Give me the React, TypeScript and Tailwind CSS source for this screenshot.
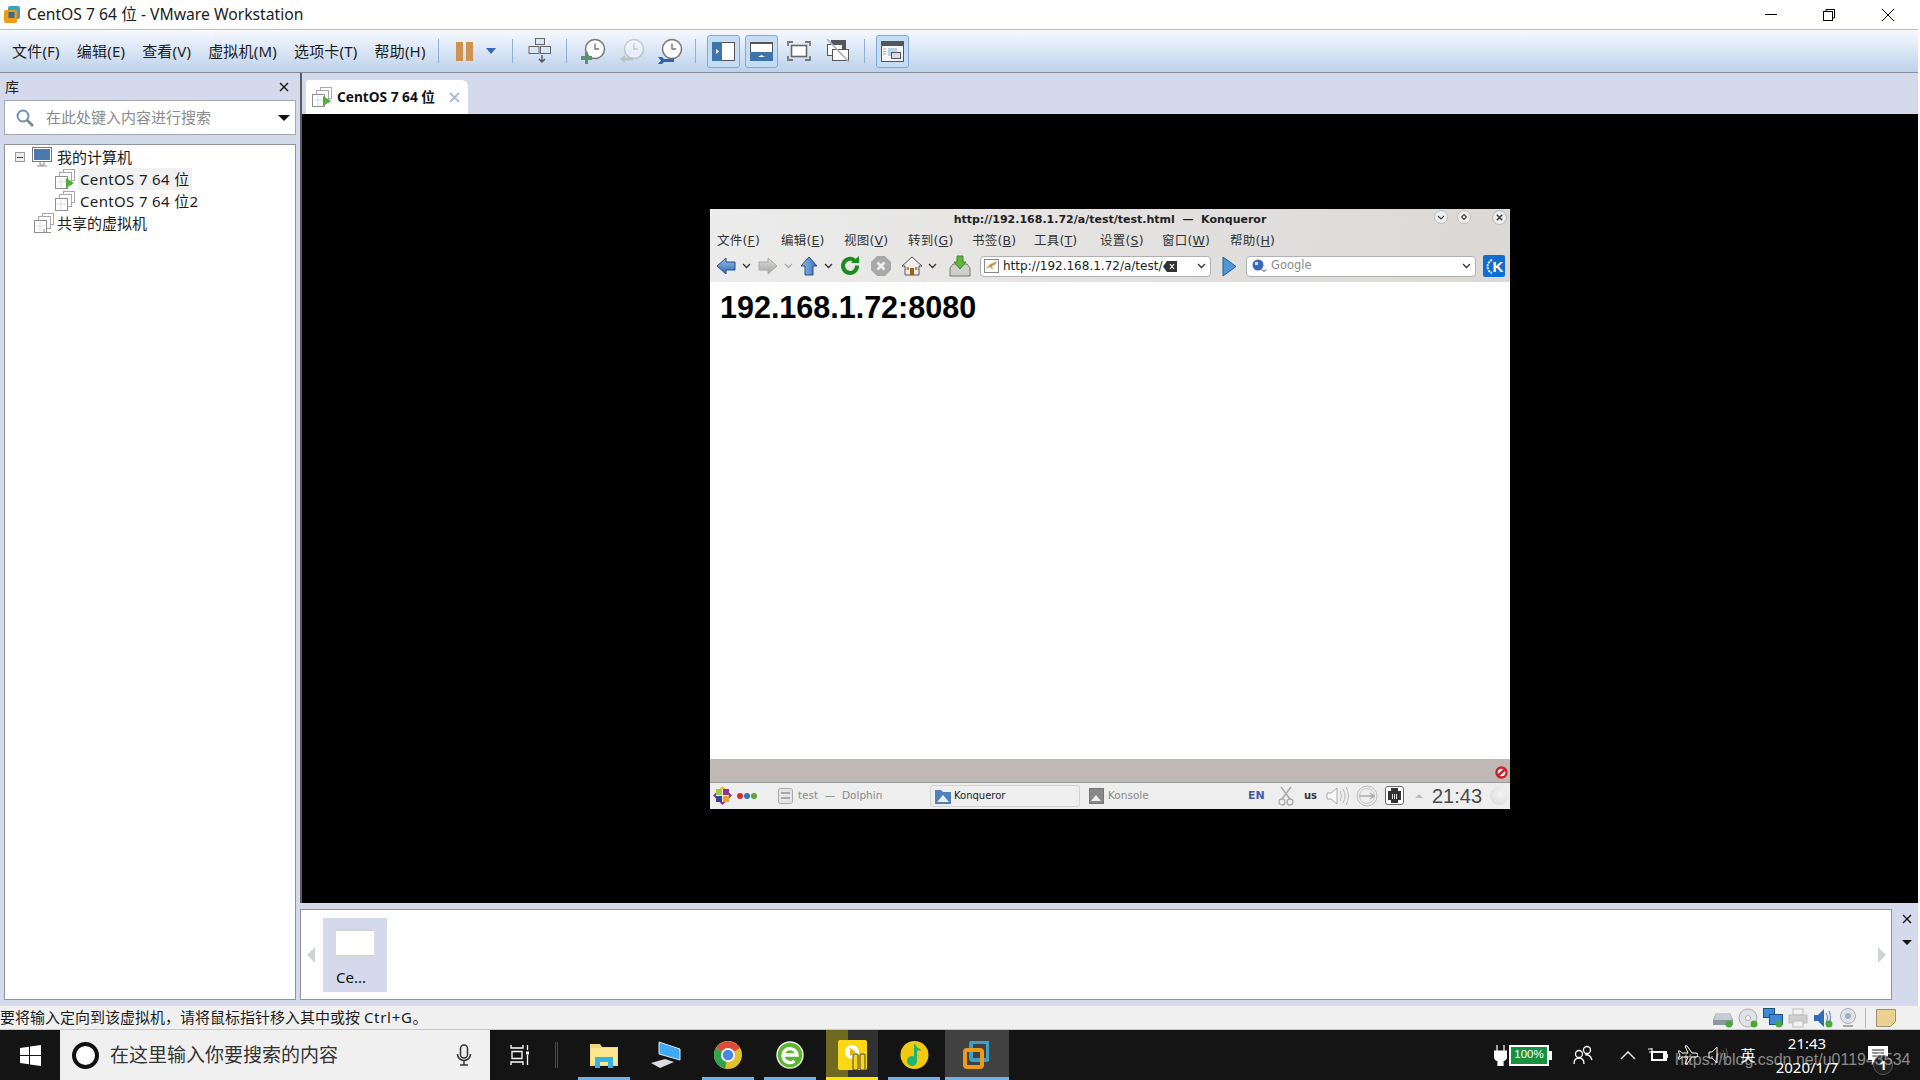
import type { ReactNode } from "react";

const vmMenu = ["文件(F)", "编辑(E)", "查看(V)", "虚拟机(M)", "选项卡(T)", "帮助(H)"];
const guestMenu: [string, string, string][] = [
  ["文件", "F", "w-[64px]"],
  ["编辑", "E", "w-[63px]"],
  ["视图", "V", "w-[64px]"],
  ["转到", "G", "w-[64px]"],
  ["书签", "B", "w-[62px]"],
  ["工具", "T", "w-[66px]"],
  ["设置", "S", "w-[62px]"],
  ["窗口", "W", "w-[68px]"],
  ["帮助", "H", "w-[50px]"],
];

function VmIcon({ play = false, shared = false }: { play?: boolean; shared?: boolean }) {
  return (
    <svg width="20" height="20" viewBox="0 0 20 20" className="shrink-0">
      <rect x="8.5" y="0.5" width="11" height="11" fill="#fff" stroke="#a8a8a8" />
      <rect x="4.5" y="3.5" width="12" height="12" fill="#fff" stroke="#a8a8a8" />
      <rect x="0.5" y="7.5" width="12" height="12" fill="#fff" stroke="#8f8f8f" />
      <path d="M6 9v9M2 13h9" stroke="#d7dfea" />
      {play && <path d="M11 9l8 5-8 5z" fill="#4fae3a" />}
      {shared && <path d="M3 19.5h14M10 16v3" stroke="#8f8f8f" />}
    </svg>
  );
}

function Sep() {
  return <div className="h-[24px] w-px shrink-0 bg-[#8fb0d4]" />;
}

function Toggle({ className, children }: { className: string; children: ReactNode }) {
  return (
    <div className={`flex h-[33px] w-[33px] shrink-0 items-center justify-center rounded-[3px] border border-[#7ea9dc] bg-[#c5dcf5] ${className}`}>
      {children}
    </div>
  );
}

function Clock({ tone, badge }: { tone: string; badge: ReactNode }) {
  return (
    <svg width="26" height="26" viewBox="0 0 26 26" className="shrink-0">
      <circle cx="15" cy="11" r="9.5" fill="#fff" stroke={tone} strokeWidth="1.5" />
      <path d="M15 5.5V11h4" fill="none" stroke={tone} strokeWidth="1.4" />
      {badge}
    </svg>
  );
}

function Toolbar() {
  return (
    <div className="mr-[2px] flex h-[44px] shrink-0 items-center border-y border-t-[#a6c1e1] border-b-[#858d99] bg-[linear-gradient(#f6f9fe,#bdd2ec)] pl-[12px]">
      <div className="flex w-[426px] shrink-0 gap-[17px] text-[15px] leading-none tracking-[0.2px] text-[#1c1c1c]">
        {vmMenu.map((m) => (
          <span key={m} className="whitespace-nowrap">{m}</span>
        ))}
      </div>
      <Sep />
      <div className="ml-[17px] flex w-[17px] shrink-0 justify-between">
        <div className="h-[19px] w-[7px] bg-[#cd9451]" />
        <div className="h-[19px] w-[7px] bg-[#cd9451]" />
      </div>
      <div className="ml-[13px] h-0 w-0 shrink-0 border-x-[5px] border-t-[6px] border-x-transparent border-t-[#3566b8]" />
      <div className="ml-[16px]"><Sep /></div>
      <svg width="24" height="26" viewBox="0 0 24 26" className="ml-[15px] shrink-0">
        <rect x="7.5" y="0.5" width="9" height="6" fill="#dbe6f4" stroke="#666" />
        <rect x="1" y="8.5" width="10" height="7" fill="#dbe6f4" stroke="#666" />
        <rect x="12.5" y="8.5" width="10" height="7" fill="#dbe6f4" stroke="#666" />
        <path d="M14 17v7M11 21l3 3 3-3" fill="none" stroke="#555" strokeWidth="1.4" />
      </svg>
      <div className="ml-[14px]"><Sep /></div>
      <div className="ml-[13px]">
        <Clock tone="#777" badge={<path d="M5 14v4H1v4h4v4h3v-4h4v-4H8v-4z" fill="#5b9170" />} />
      </div>
      <div className="ml-[13px] opacity-40">
        <Clock tone="#999" badge={<path d="M1 21l5-4v2.500h8v3H6V25z" fill="#a39a80" />} />
      </div>
      <div className="ml-[12px]">
        <Clock tone="#777" badge={<path d="M1 19h4l2 2h10v3H7l-2 2H1l3-3.500z" fill="#2a66a8" />} />
      </div>
      <div className="ml-[12px]"><Sep /></div>
      <Toggle className="ml-[11px]">
        <svg width="23" height="19" viewBox="0 0 23 19">
          <rect x="0.500" y="0.500" width="22" height="18" fill="#fff" stroke="#555" />
          <rect x="0" y="0" width="10" height="19" fill="#3f74ab" />
          <path d="M4 7l3 2.500L4 12z" fill="#fff" />
        </svg>
      </Toggle>
      <Toggle className="ml-[5px]">
        <svg width="23" height="19" viewBox="0 0 23 19">
          <rect x="0.500" y="0.500" width="22" height="18" fill="#fff" stroke="#555" />
          <rect x="0" y="10" width="23" height="9" fill="#3f74ab" />
          <rect x="0" y="0" width="23" height="2" fill="#555" />
          <path d="M8 15l3.500-2 3.500 2z" fill="#fff" />
        </svg>
      </Toggle>
      <svg width="24" height="20" viewBox="0 0 24 20" className="ml-[9px] shrink-0">
        <rect x="4.500" y="4.500" width="15" height="11" fill="#fff" stroke="#666" strokeWidth="1.600" />
        <path d="M1 5V1h5M18 1h5v4M1 15v4h5M18 19h5v-4" fill="none" stroke="#777" strokeWidth="1.800" />
      </svg>
      <svg width="24" height="24" viewBox="0 0 24 24" className="ml-[15px] shrink-0">
        <rect x="5" y="1" width="15" height="14" fill="#555" />
        <rect x="1.500" y="5.500" width="15" height="11" fill="#fff" stroke="#555" />
        <rect x="6.500" y="10.500" width="16" height="11" fill="#fff" stroke="#555" />
        <path d="M1 0l22 23" stroke="#aeb4bd" strokeWidth="1.800" />
      </svg>
      <div className="ml-[14px]"><Sep /></div>
      <Toggle className="ml-[11px]">
        <svg width="23" height="21" viewBox="0 0 23 21">
          <rect x="0.500" y="0.500" width="22" height="20" fill="#f4f6fa" stroke="#555" />
          <rect x="0" y="0" width="23" height="5" fill="#555" />
          <path d="M2 8h3M2 10.500h3M2 13h3" stroke="#e6a93c" />
          <rect x="7" y="7" width="9" height="8" fill="#bcd2ea" />
          <rect x="10.500" y="11.500" width="9" height="6" fill="#d9dde2" stroke="#555" />
        </svg>
      </Toggle>
    </div>
  );
}

function Library() {
  return (
    <aside className="flex w-[300px] shrink-0 flex-col">
      <div className="flex h-[27px] shrink-0 items-center justify-between pl-[5px] pr-[11px] text-[14px] text-[#222]">
        <span>库</span>
        <svg width="10" height="10" viewBox="0 0 10 10">
          <path d="M1 1l8 8M9 1l-8 8" stroke="#111" strokeWidth="1.400" />
        </svg>
      </div>
      <div className="ml-[4px] flex h-[35px] w-[292px] shrink-0 items-center border border-[#a3a7b0] bg-white pl-[10px] pr-[5px]">
        <svg width="20" height="20" viewBox="0 0 20 20" className="shrink-0">
          <circle cx="8" cy="8" r="5.500" fill="#fff" stroke="#6f8fb5" strokeWidth="2" />
          <path d="M12 12l6 6" stroke="#7d8794" strokeWidth="2.600" />
        </svg>
        <span className="ml-[11px] text-[15px] text-[#8a8a8a]">在此处键入内容进行搜索</span>
        <div className="ml-auto h-0 w-0 border-x-[6px] border-t-[6px] border-x-transparent border-t-[#111]" />
      </div>
      <div className="ml-[4px] mt-[9px] flex w-[292px] flex-1 flex-col border border-[#8e92a0] bg-white pt-px text-[15px] leading-none text-[#1c1c1c]">
        <div className="flex h-[22px] items-center pl-[10px]">
          <div className="flex h-[10px] w-[10px] items-center justify-center border border-[#999] bg-[#eee]">
            <div className="h-px w-[6px] bg-[#444]" />
          </div>
          <svg width="20" height="20" viewBox="0 0 20 20" className="ml-[7px]">
            <rect x="0.500" y="0.500" width="19" height="14" fill="#fff" stroke="#777" />
            <rect x="2" y="2" width="16" height="11" fill="#4b79ad" />
            <path d="M8 15v3h4v-3M5 19h10" fill="none" stroke="#888" />
          </svg>
          <span className="ml-[5px]">我的计算机</span>
        </div>
        <div className="flex h-[22px] items-center pl-[50px]">
          <VmIcon play />
          <span className="ml-[3px] flex h-[22px] items-center bg-[#f1f1f1] pl-[2px] pr-[2px] tracking-[0.35px]">CentOS 7 64 位</span>
        </div>
        <div className="flex h-[22px] items-center pl-[50px]">
          <VmIcon />
          <span className="ml-[5px] tracking-[0.35px]">CentOS 7 64 位2</span>
        </div>
        <div className="flex h-[22px] items-center pl-[29px]">
          <VmIcon shared />
          <span className="ml-[3px]">共享的虚拟机</span>
        </div>
      </div>
    </aside>
  );
}

function Chev({ className = "" }: { className?: string }) {
  return (
    <svg width="9" height="6" viewBox="0 0 9 6" className={`shrink-0 ${className}`}>
      <path d="M1 1l3.500 3.500L8 1" fill="none" stroke="currentColor" strokeWidth="1.300" />
    </svg>
  );
}

function Arrow({ rotate, from, to, stroke }: { rotate: string; from: string; to: string; stroke: string }) {
  return (
    <svg width="20" height="18" viewBox="0 0 20 18" className={`shrink-0 ${rotate}`}>
      <defs>
        <linearGradient id={`a${from.slice(1)}`} x1="0" x2="0" y1="0" y2="1">
          <stop offset="0" stopColor={from} />
          <stop offset="1" stopColor={to} />
        </linearGradient>
      </defs>
      <path d="M1 9l9-8v4h9v8h-9v4z" fill={`url(#a${from.slice(1)})`} stroke={stroke} />
    </svg>
  );
}

function GuestToolbar() {
  return (
    <div className="flex h-[31px] items-center pl-[6px] text-[#333]">
      <Arrow rotate="" from="#9cc0e8" to="#2e6cb5" stroke="#234f87" />
      <Chev className="ml-[6px]" />
      <div className="ml-[7px]"><Arrow rotate="rotate-180" from="#a5a5a5" to="#dddddd" stroke="#aaa" /></div>
      <Chev className="ml-[6px] text-[#aaa]" />
      <div className="ml-[6px]"><Arrow rotate="rotate-90" from="#2e6cb5" to="#9cc0e8" stroke="#234f87" /></div>
      <Chev className="ml-[5px]" />
      <svg width="20" height="20" viewBox="0 0 20 20" className="ml-[7px] shrink-0">
        <path d="M17 9.500A7 7 0 1 1 14.500 4.500" fill="none" stroke="#1d8a1d" strokeWidth="4" />
        <path d="M11 7h8V0z" fill="#1d8a1d" />
      </svg>
      <svg width="20" height="20" viewBox="0 0 20 20" className="ml-[11px] shrink-0">
        <path d="M6 0h8l6 6v8l-6 6H6l-6-6V6z" fill="#a9a9a9" />
        <path d="M6.500 6.500l7 7M13.500 6.500l-7 7" stroke="#eee" strokeWidth="2.600" />
      </svg>
      <svg width="20" height="20" viewBox="0 0 20 20" className="ml-[11px] shrink-0">
        <path d="M10 1L0 10h3v9h14v-9h3z" fill="#eee" stroke="#555" />
        <rect x="8" y="12" width="4" height="7" fill="#9c5f22" />
        <rect x="4.500" y="11" width="2.500" height="3" fill="#d08a2c" />
        <rect x="13" y="11" width="2.500" height="3" fill="#d08a2c" />
      </svg>
      <Chev className="ml-[6px]" />
      <svg width="22" height="22" viewBox="0 0 22 22" className="ml-[12px] shrink-0">
        <path d="M1 13l3-4h14l3 4v8H1z" fill="#cfcfca" stroke="#777" />
        <path d="M8 1h6v6h3l-6 7-6-7h3z" fill="#63b33f" stroke="#3c8a28" />
      </svg>
      <div className="ml-[9px] flex h-[21px] w-[231px] shrink-0 items-center rounded-[4px] border border-[#b0b0b0] bg-white pl-[3px] pr-[4px]">
        <svg width="15" height="14" viewBox="0 0 15 14" className="shrink-0">
          <rect x="0.500" y="0.500" width="14" height="13" fill="#fff" stroke="#888" />
          <path d="M2 10l4-5 3-1 4-2-2 4-3 1 1 4-3-3z" fill="#c89a4c" />
        </svg>
        <span className="ml-[4px] font-['DejaVu_Sans',sans-serif] text-[12px] leading-none text-[#222]">http://192.168.1.72/a/test/</span>
        <svg width="14" height="11" viewBox="0 0 14 11" className="ml-[1px] shrink-0">
          <path d="M0 5.500L4 0h10v11H4z" fill="#333" />
          <path d="M7 3l4 5M11 3L7 8" stroke="#fff" strokeWidth="1.200" />
        </svg>
        <Chev className="ml-auto" />
      </div>
      <svg width="15" height="21" viewBox="0 0 15 21" className="ml-[11px] shrink-0">
        <path d="M1 1l13 9.500L1 20z" fill="#4f97d8" stroke="#1d5c9e" />
      </svg>
      <div className="ml-[9px] flex h-[21px] w-[230px] shrink-0 items-center rounded-[4px] border border-[#b0b0b0] bg-white pl-[5px] pr-[4px]">
        <svg width="16" height="14" viewBox="0 0 16 14" className="shrink-0">
          <circle cx="6" cy="6" r="5.500" fill="#3a68b8" />
          <path d="M3 3h3v3H3z" fill="#cfe0f5" />
          <path d="M10 10.500l2 2 2-2" fill="none" stroke="#333" />
        </svg>
        <span className="ml-[3px] font-['DejaVu_Sans',sans-serif] text-[11.500px] leading-none text-[#8a8a8a]">Google</span>
        <Chev className="ml-auto" />
      </div>
      <div className="ml-[7px] flex h-[22px] w-[22px] shrink-0 items-center justify-center rounded-[2px] bg-[#0f6fd0]">
        <svg width="8" height="18" viewBox="0 0 8 18" className="shrink-0">
          <path d="M7 3a7 7 0 0 0 0 13" fill="none" stroke="#fff" strokeWidth="2" strokeDasharray="2 1" />
        </svg>
        <span className="font-['Liberation_Sans',sans-serif] text-[15px] font-bold leading-none text-white">K</span>
      </div>
    </div>
  );
}

function Panel() {
  return (
    <div className="flex h-[26px] items-center bg-[#eeeeee] pl-[3px] font-['DejaVu_Sans',sans-serif] text-[10.500px] leading-none text-[#8a8a8a]">
      <svg width="19" height="19" viewBox="0 0 19 19" className="shrink-0">
        <path d="M9.500 0l3 3h-6z" fill="#e8b93b" />
        <rect x="3" y="3" width="6" height="6" fill="#9ccb3f" />
        <rect x="10" y="3" width="6" height="6" fill="#93338c" />
        <rect x="3" y="10" width="6" height="6" fill="#3d3d8f" />
        <rect x="10" y="10" width="6" height="6" fill="#eaa629" />
        <path d="M0 9.500l3-3v6zM19 9.500l-3-3v6zM9.500 19l-3-3h6z" fill="#93338c" />
      </svg>
      <div className="ml-[5px] flex w-[21px] shrink-0 gap-px">
        <span className="h-[6px] w-[6px] rounded-full bg-[#cc2f35]" />
        <span className="h-[6px] w-[6px] rounded-full bg-[#2f74c0]" />
        <span className="h-[6px] w-[6px] rounded-full bg-[#5aa23a]" />
      </div>
      <svg width="15" height="16" viewBox="0 0 15 16" className="ml-[20px] shrink-0">
        <rect x="0.500" y="0.500" width="14" height="15" rx="2" fill="#e4e4e4" stroke="#aaa" />
        <path d="M3 5h9M3 10h9" stroke="#aaa" strokeWidth="2" />
      </svg>
      <span className="ml-[5px] w-[132px] shrink-0 whitespace-nowrap">test &nbsp;— &nbsp;Dolphin</span>
      <div className="flex h-[22px] w-[150px] shrink-0 items-center rounded-[3px] border border-[#d2d2d2] pl-[4px] text-[10px] text-[#222]">
        <svg width="16" height="16" viewBox="0 0 16 16" className="shrink-0">
          <path d="M0 2h6l2 2h8v12H0z" fill="#4f81bd" />
          <path d="M2 14l6-7 6 7z" fill="#e8eef5" />
        </svg>
        <span className="ml-[3px]">Konqueror</span>
      </div>
      <svg width="15" height="16" viewBox="0 0 15 16" className="ml-[9px] shrink-0">
        <rect x="0.500" y="0.500" width="14" height="15" fill="#888" stroke="#777" />
        <path d="M2 13l5-6 5 6z" fill="#eee" />
      </svg>
      <span className="ml-[4px] w-[140px] shrink-0">Konsole</span>
      <span className="w-[28px] shrink-0 text-[11px] font-bold text-[#4a5aa8]">EN</span>
      <svg width="16" height="20" viewBox="0 0 16 20" className="ml-[2px] shrink-0">
        <path d="M3 1l9 12M13 1L4 13" stroke="#aaa" strokeWidth="1.500" />
        <circle cx="4" cy="16" r="3" fill="none" stroke="#aaa" strokeWidth="1.300" />
        <circle cx="12" cy="16" r="3" fill="none" stroke="#aaa" strokeWidth="1.300" />
      </svg>
      <span className="ml-[10px] w-[18px] shrink-0 text-[10px] font-bold text-[#333]">us</span>
      <svg width="24" height="20" viewBox="0 0 24 20" className="ml-[4px] shrink-0">
        <path d="M1 7h4l6-5v16l-6-5H1z" fill="#f7f7f7" stroke="#aaa" />
        <path d="M14 5q3 5 0 10M17 3q4 7 0 14M20 1q5 9 0 18" fill="none" stroke="#bbb" />
      </svg>
      <svg width="22" height="22" viewBox="0 0 22 22" className="ml-[6px] shrink-0">
        <circle cx="11" cy="11" r="10" fill="none" stroke="#bbb" />
        <circle cx="11" cy="11" r="7.500" fill="none" stroke="#c6c6c6" />
        <path d="M3 11h16M14 8l4 3-4 3" fill="none" stroke="#aaa" strokeWidth="1.300" />
      </svg>
      <div className="ml-[7px] flex h-[19px] w-[19px] shrink-0 items-center justify-center rounded-[3px] border border-[#666] bg-white">
        <svg width="13" height="15" viewBox="0 0 13 15">
          <path d="M3 0h7v3h3v9h-3v3H3v-3H0V3h3z" fill="#333" />
          <path d="M4 6h1v5H4zM6 6h1v5H6zM8 6h1v5H8z" fill="#ddd" />
        </svg>
      </div>
      <div className="ml-[11px] h-0 w-0 shrink-0 border-x-[4px] border-b-[4px] border-x-transparent border-b-[#bbb]" />
      <span className="ml-[9px] shrink-0 font-['Liberation_Sans',sans-serif] text-[20px] text-[#4a4a4a]">21:43</span>
      <div className="ml-[8px] h-[18px] w-[18px] shrink-0 rounded-full bg-[radial-gradient(circle_at_60%_40%,#f5f5f5,#d5d5d5)]" />
    </div>
  );
}

function Guest() {
  return (
    <div className="flex h-[600px] w-[800px] flex-col bg-white">
      <div className="h-[73px] shrink-0 bg-[linear-gradient(100deg,#ececec,#dbd8d5)]">
        <div className="relative flex h-[24px] items-center justify-center pb-[3px] font-['DejaVu_Sans',sans-serif] text-[11px] font-bold leading-none text-[#222]">
          <span>http://192.168.1.72/a/test/test.html &nbsp;— &nbsp;Konqueror</span>
          <div className="absolute right-[3px] top-[1px] flex items-center text-[#555]">
            {["M4 6l3 3 3-3", "M7 4.500L9.500 7 7 9.500 4.500 7z"].map((d, i) => (
              <svg key={d} width="14" height="14" viewBox="0 0 14 14" className={i ? "ml-[9px]" : ""}>
                <circle cx="7" cy="7" r="6.500" fill="#efefef" stroke="#bbb" />
                <path d={d} fill="none" stroke="#444" strokeWidth="1.200" />
              </svg>
            ))}
            <svg width="15" height="15" viewBox="0 0 14 14" className="ml-[21px]">
              <circle cx="7" cy="7" r="6.500" fill="#efefef" stroke="#bbb" />
              <path d="M4.500 4.500l5 5M9.500 4.500l-5 5" stroke="#333" strokeWidth="1.300" />
            </svg>
          </div>
        </div>
        <div className="flex h-[18px] items-center pl-[7px] font-['DejaVu_Sans','Noto_Sans_CJK_SC',sans-serif] text-[12.500px] leading-none tracking-[0.2px] text-[#333]">
          {guestMenu.map(([label, key, w]) => (
            <span key={key} className={`${w} shrink-0 whitespace-nowrap`}>
              {label}(<span className="underline">{key}</span>)
            </span>
          ))}
        </div>
        <GuestToolbar />
      </div>
      <div className="flex-1 pl-[10px] pt-[8px] font-['Liberation_Sans',sans-serif] text-[30.500px] font-bold leading-[34px] text-black">
        192.168.1.72:8080
      </div>
      <div className="flex h-[23px] shrink-0 justify-end bg-[#c0b8b4] pr-[2px] pt-[7px]">
        <svg width="13" height="13" viewBox="0 0 13 13">
          <circle cx="6.500" cy="6.500" r="5" fill="#fff" stroke="#d01f25" strokeWidth="2.400" />
          <path d="M3 9.500l7-6" stroke="#d01f25" strokeWidth="2.400" />
        </svg>
      </div>
      <div className="h-px shrink-0 bg-[#999]" />
      <Panel />
    </div>
  );
}

function Workspace() {
  return (
    <main className="flex min-w-0 flex-1 flex-col">
      <div className="flex h-[41px] shrink-0 items-end border-l-2 border-[#5a5d66] pl-[4px]">
        <div className="flex h-[34px] w-[162px] items-center rounded-tr-[6px] rounded-tl-[3px] bg-white pl-[6px]">
          <VmIcon play />
          <span className="ml-[5px] text-[13.700px] font-bold leading-none text-[#111]">CentOS 7 64 位</span>
          <svg width="11" height="11" viewBox="0 0 11 11" className="ml-auto mr-[8px]">
            <path d="M1 1l9 9M10 1l-9 9" stroke="#a9bdd6" strokeWidth="1.800" />
          </svg>
        </div>
      </div>
      <div className="flex flex-1 items-center justify-center border-l-2 border-[#5a5d66] bg-black">
        <Guest />
      </div>
      <div className="mt-[6px] flex h-[91px] shrink-0">
        <div className="flex w-[1592px] items-center border border-[#8e92a0] bg-white">
          <div className="ml-[6px] h-0 w-0 border-y-[8px] border-r-[8px] border-y-transparent border-r-[#cfd3d6]" />
          <div className="ml-[8px] flex h-[74px] w-[64px] flex-col bg-[#d4d9ec] pl-[13px] pt-[11px]">
            <div className="h-[28px] w-[38px] border-y-2 border-[#d5d5d5] bg-white" />
            <span className="mt-[13px] text-[15px] leading-none text-[#111]">Ce...</span>
          </div>
          <div className="ml-auto mr-[5px] h-0 w-0 border-y-[8px] border-l-[8px] border-y-transparent border-l-[#cfd3d6]" />
        </div>
        <div className="flex flex-1 flex-col items-center pl-[3px] pt-[5px]">
          <svg width="10" height="10" viewBox="0 0 10 10">
            <path d="M1 1l8 8M9 1l-8 8" stroke="#111" strokeWidth="1.400" />
          </svg>
          <div className="mt-[16px] h-0 w-0 border-x-[5px] border-t-[5px] border-x-transparent border-t-[#111]" />
        </div>
      </div>
    </main>
  );
}

function StatusIcon({ children }: { children: ReactNode }) {
  return (
    <svg width="20" height="20" viewBox="0 0 20 20" className="ml-[5px] shrink-0">
      {children}
    </svg>
  );
}

const dot = <circle cx="16" cy="16" r="3.500" fill="#4aa83a" />;

function StatusBar() {
  return (
    <div className="flex h-[24px] shrink-0 items-center border-b border-[#c8c8c8] bg-[#f0f0f0] text-[15px] leading-none text-[#1c1c1c]">
      <span>要将输入定向到该虚拟机，请将鼠标指针移入其中或按 <span className="tracking-[0.7px]">Ctrl+G</span>。</span>
      <div className="ml-auto flex items-center pr-[24px]">
        <StatusIcon>
          <path d="M3 5h14l3 7v5H0v-5z" fill="#8c96a0" />
          <path d="M3 5h14l2 7H1z" fill="#c5ccd2" />
          {dot}
        </StatusIcon>
        <StatusIcon>
          <circle cx="10" cy="10" r="9" fill="#dfe3e8" stroke="#aaa" />
          <circle cx="10" cy="10" r="2.500" fill="#fff" stroke="#aaa" />
          {dot}
        </StatusIcon>
        <StatusIcon>
          <rect x="0.500" y="0.500" width="11" height="9" fill="#3b8ad8" stroke="#1d4f85" />
          <rect x="6.500" y="6.500" width="13" height="10" fill="#3b8ad8" stroke="#1d4f85" />
          {dot}
        </StatusIcon>
        <StatusIcon>
          <rect x="5" y="1" width="10" height="6" fill="#f2f2f2" stroke="#bbb" />
          <rect x="1" y="7" width="18" height="8" fill="#cfcfcf" stroke="#bbb" />
          <rect x="5" y="13" width="10" height="6" fill="#f2f2f2" stroke="#bbb" />
        </StatusIcon>
        <StatusIcon>
          <path d="M1 7h4l6-6v18l-6-6H1z" fill="#2e6cb5" />
          <path d="M13 5q3 5 0 10M16 3q3 7 0 13" fill="none" stroke="#6a93c2" strokeWidth="1.300" />
          {dot}
        </StatusIcon>
        <StatusIcon>
          <circle cx="10" cy="8" r="7.500" fill="#dfe3e8" stroke="#aab" />
          <circle cx="10" cy="8" r="3" fill="#9fb1c4" />
          <path d="M5 18h10" stroke="#aaa" strokeWidth="2" />
        </StatusIcon>
        <div className="ml-[7px] mr-[10px] h-[20px] w-px bg-[#b5b5b5]" />
        <svg width="20" height="18" viewBox="0 0 20 18" className="shrink-0">
          <path d="M0.500 0.500h19v12l-5 5h-14z" fill="#ecd193" stroke="#9c8f73" />
        </svg>
      </div>
    </div>
  );
}

function TaskCell({ line, tint, children }: { line?: string; tint?: string; children: ReactNode }) {
  return (
    <div className="relative flex h-[50px] w-[62px] shrink-0 items-center justify-center">
      {tint && <div className={`absolute inset-y-0 ${tint}`} />}
      <div className="relative">{children}</div>
      {line && <div className={`absolute bottom-0 h-[3px] ${line}`} />}
    </div>
  );
}

function TrayCell({ w, children }: { w: string; children: ReactNode }) {
  return <div className={`flex h-[50px] shrink-0 items-center justify-center ${w}`}>{children}</div>;
}

function Taskbar() {
  const blueLine = "left-[5px] right-[5px] bg-[#6fb1e8]";
  return (
    <footer className="relative flex h-[50px] shrink-0 items-center bg-[#141414] text-white">
      <div className="flex h-[50px] w-[60px] shrink-0 items-center justify-center">
        <svg width="21" height="21" viewBox="0 0 21 21">
          <path d="M0 3l9-1.300V10H0zM10 1.500L21 0v10H10zM0 11h9v8.300L0 18zM10 11h11v10l-11-1.500z" fill="#fff" />
        </svg>
      </div>
      <div className="flex h-[50px] w-[430px] shrink-0 items-center bg-[#f0f0f0] pl-[12px] text-[#333]">
        <div className="h-[27px] w-[27px] shrink-0 rounded-full border-[4px] border-[#111] bg-white" />
        <span className="ml-[11px] text-[19px] leading-none">在这里输入你要搜索的内容</span>
        <svg width="16" height="22" viewBox="0 0 16 22" className="ml-auto mr-[18px]">
          <rect x="4.500" y="1" width="7" height="13" rx="3.500" fill="none" stroke="#333" strokeWidth="1.500" />
          <path d="M1.500 10a6.500 6.500 0 0 0 13 0M8 17v4M4 21h8" fill="none" stroke="#333" strokeWidth="1.500" />
        </svg>
      </div>
      <div className="flex h-[50px] w-[60px] shrink-0 items-center justify-center">
        <svg width="20" height="20" viewBox="0 0 20 20">
          <path d="M1 0v3h12V0M2 6.500h10v7H2zM1 20v-3h12v3M17.500 0v5M17.500 10v10" fill="none" stroke="#fff" strokeWidth="1.300" />
          <rect x="16" y="6.500" width="3" height="3" fill="#fff" />
        </svg>
      </div>
      <div className="ml-[5px] h-[26px] w-[3px] shrink-0 border-x border-[#4a4a4a]" />
      <div className="ml-[15px] flex">
        <TaskCell line={blueLine}>
          <svg width="28" height="26" viewBox="0 0 28 26">
            <path d="M0 2h10l2 3h16v19H0z" fill="#f2d57f" />
            <path d="M1 6h26v17H1z" fill="#fde78e" />
            <path d="M5 26V15h18v11h-5v-6h-8v6z" fill="#35b3e8" />
          </svg>
        </TaskCell>
        <TaskCell>
          <svg width="30" height="28" viewBox="0 0 30 28">
            <path d="M8 1l21 7v11L8 13z" fill="#3fa9f5" stroke="#dfe7ef" />
            <path d="M0 22l14-4 9 3-14 6z" fill="#d9dde2" />
          </svg>
        </TaskCell>
        <TaskCell line={blueLine}>
          <svg width="28" height="28" viewBox="0 0 28 28">
            <circle cx="14" cy="14" r="14" fill="#e2c12f" />
            <path d="M14 14L2 7A14 14 0 0 1 26 7z" fill="#db4a3b" />
            <path d="M14 14L2 7A14 14 0 0 0 11 27.700z" fill="#2fa44f" />
            <circle cx="14" cy="14" r="7" fill="#fff" />
            <circle cx="14" cy="14" r="5.300" fill="#4a86e8" />
          </svg>
        </TaskCell>
        <TaskCell line={blueLine}>
          <svg width="30" height="30" viewBox="0 0 30 30">
            <circle cx="15" cy="15" r="13" fill="#5cb531" stroke="#eaf5e4" strokeWidth="1.400" />
            <path d="M8 15h14a7 7 0 1 0-2.500 6" fill="none" stroke="#fff" strokeWidth="3.400" />
          </svg>
        </TaskCell>
        <TaskCell
          line="left-[5px] right-[5px] bg-[#ffe600]"
          tint="left-[5px] right-[5px] bg-[linear-gradient(90deg,#6f6a20_42%,#303030_42%)]"
        >
          <svg width="29" height="30" viewBox="0 0 29 30">
            <rect x="0" y="0" width="29" height="30" rx="2" fill="#fbd816" />
            <circle cx="14" cy="12" r="7" fill="#fff" />
            <path d="M12 8l6 4-6 4z" fill="#e6b800" />
            <rect x="15" y="14" width="5" height="16" rx="1" fill="#fbd816" stroke="#444" />
            <rect x="22" y="14" width="5" height="16" rx="1" fill="#fbd816" stroke="#444" />
          </svg>
        </TaskCell>
        <TaskCell line={blueLine}>
          <svg width="29" height="30" viewBox="0 0 29 30">
            <circle cx="14.500" cy="15" r="14" fill="#f2c90f" />
            <path d="M15 4c1 4 5 4 7 7-2-1-4-1-5 0v10a5 5 0 1 1-3-4.500V4z" fill="#1db574" />
          </svg>
        </TaskCell>
        <TaskCell line="left-0 right-[-2px] bg-[#6fb1e8]" tint="left-0 right-[-2px] bg-[#414141]">
          <svg width="26" height="28" viewBox="0 0 26 28">
            <rect x="8" y="1" width="17" height="18" rx="2" fill="none" stroke="#3f9fc5" strokeWidth="4" />
            <rect x="2" y="9" width="17" height="17" rx="2" fill="none" stroke="#ee9b1c" strokeWidth="4" />
          </svg>
        </TaskCell>
      </div>
      <div className="ml-auto flex w-[430px] shrink-0 pl-[3px]">
        <TrayCell w="w-[60px]">
          <svg width="13" height="21" viewBox="0 0 13 21" className="shrink-0">
            <path d="M3 0v6M10 0v6M0 6h13v5a6 6 0 0 1-4 5v5H4v-5a6 6 0 0 1-4-5z" fill="#fff" stroke="#fff" strokeWidth="1.200" />
          </svg>
          <div className="ml-[2px] flex h-[21px] w-[40px] shrink-0 items-center justify-center border-2 border-white bg-[#17913e] font-['Liberation_Sans',sans-serif] text-[11.500px] leading-none">
            100%
          </div>
          <div className="h-[9px] w-[3px] shrink-0 bg-white" />
        </TrayCell>
        <TrayCell w="w-[60px]">
          <svg width="20" height="20" viewBox="0 0 20 20">
            <circle cx="14" cy="5" r="3.500" fill="none" stroke="#fff" strokeWidth="1.300" />
            <circle cx="6" cy="9" r="3.500" fill="none" stroke="#fff" strokeWidth="1.300" />
            <path d="M1 19c0-4 2-6 5-6s5 2 5 6M12 10c3-1 6 1 7 5" fill="none" stroke="#fff" strokeWidth="1.300" />
          </svg>
        </TrayCell>
        <TrayCell w="w-[30px]">
          <svg width="16" height="9" viewBox="0 0 16 9">
            <path d="M1 8l7-7 7 7" fill="none" stroke="#fff" strokeWidth="1.300" />
          </svg>
        </TrayCell>
        <TrayCell w="w-[30px]">
          <svg width="20" height="14" viewBox="0 0 20 14">
            <path d="M0 1h4M4 0v4M1 4h3v3" fill="none" stroke="#fff" />
            <rect x="3.500" y="3.500" width="15" height="9" fill="#fff" stroke="#fff" />
            <rect x="5" y="5" width="10" height="6" fill="#141414" />
            <rect x="19" y="6" width="1" height="4" fill="#fff" />
          </svg>
        </TrayCell>
        <TrayCell w="w-[30px]">
          <svg width="20" height="20" viewBox="0 0 20 20">
            <path d="M7 19l3-7H4l-2 2H0l2-4-2-4h2l2 2h6L7 1h2l5 7h4a2 2 0 0 1 0 4h-4l-5 7z" fill="none" stroke="#fff" />
          </svg>
        </TrayCell>
        <TrayCell w="w-[30px]">
          <svg width="20" height="20" viewBox="0 0 20 20">
            <path d="M1 7h3l5-5v16l-5-5H1z" fill="none" stroke="#fff" />
            <path d="M12 7q2 3 0 6M15 5q3 5 0 10M18 3q3 7 0 14" fill="none" stroke="#555" />
          </svg>
        </TrayCell>
        <TrayCell w="w-[30px]">
          <span className="text-[15px] leading-none">英</span>
        </TrayCell>
        <div className="flex h-[50px] w-[88px] shrink-0 flex-col items-center justify-center text-[15px] leading-[24px]">
          <span>21:43</span>
          <span>2020/1/7</span>
        </div>
        <TrayCell w="w-[54px]">
          <div className="relative">
            <svg width="20" height="18" viewBox="0 0 20 18">
              <path d="M0 0h20v14H8l-4 4v-4H0z" fill="#fff" />
              <path d="M4 4h12M4 7h12M4 10h12" stroke="#222" />
            </svg>
            <div className="absolute left-[5px] top-[9px] flex h-[20px] w-[20px] items-center justify-center rounded-full border border-[#555] bg-[#222] text-[13px] font-bold leading-none">
              1
            </div>
          </div>
        </TrayCell>
      </div>
      <span className="absolute left-[1675px] top-[22px] whitespace-nowrap font-['Liberation_Sans',sans-serif] text-[16px] leading-none text-white/50">
        https://blog.csdn.net/u011943534
      </span>
    </footer>
  );
}

export default function App() {
  return (
    <div className="flex h-[1080px] w-[1920px] flex-col overflow-hidden bg-white font-['Noto_Sans','Noto_Sans_CJK_SC',sans-serif]">
      <header className="flex h-[29px] shrink-0 items-center pl-[3px]">
        <svg width="18" height="19" viewBox="0 0 18 19" className="shrink-0">
          <rect x="5" y="1" width="12" height="13" rx="2" fill="#3f9fc5" />
          <rect x="1" y="5" width="13" height="13" rx="2" fill="#ee9b1c" />
          <rect x="5.500" y="7" width="6" height="6" fill="#3b6c8a" />
        </svg>
        <span className="ml-[6px] text-[15.700px] leading-none text-[#1c1c1c]">CentOS 7 64 位 - VMware Workstation</span>
        <div className="ml-auto flex items-center">
          <div className="h-px w-[12px] bg-black" />
          <svg width="12" height="12" viewBox="0 0 12 12" className="ml-[46px]">
            <rect x="0.500" y="2.500" width="9" height="9" fill="#fff" stroke="#000" />
            <path d="M3 2.500V.5h8.500V9H9.500" fill="none" stroke="#000" />
          </svg>
          <svg width="12" height="12" viewBox="0 0 12 12" className="ml-[47px] mr-[26px]">
            <path d="M0 0l12 12M12 0L0 12" stroke="#000" />
          </svg>
        </div>
      </header>
      <Toolbar />
      <div className="mr-[2px] flex min-h-0 flex-1 bg-[#d4d9ec] pb-[6px]">
        <Library />
        <Workspace />
      </div>
      <StatusBar />
      <Taskbar />
    </div>
  );
}
